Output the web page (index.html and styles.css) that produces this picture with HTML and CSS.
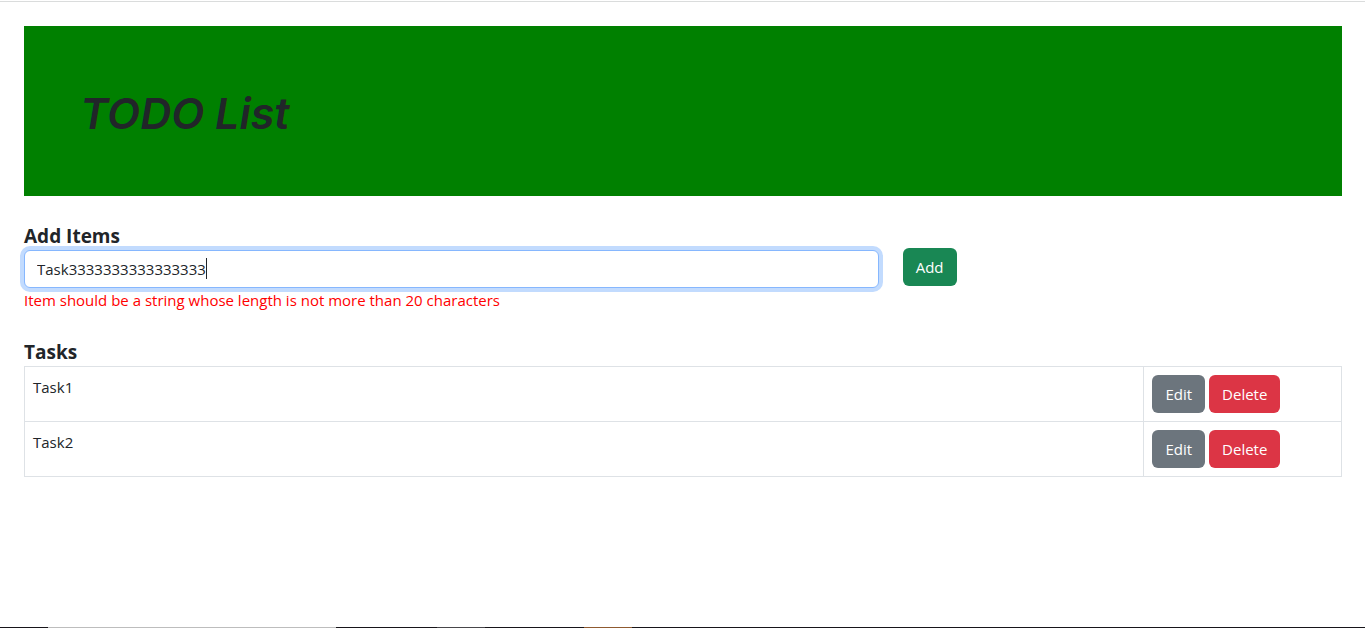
FILE: index.html
```
<!DOCTYPE html>
<html lang="en">
<head>
<meta charset="utf-8">
<meta name="viewport" content="width=device-width, initial-scale=1">
<title>TODO List</title>
<link rel="stylesheet" href="styles.css">
</head>
<body>
<main class="page">
  <header class="banner"><h1 class="banner-title">TODO List</h1></header>
  <form class="add-form">
    <div class="field">
      <label class="heading" for="item">Add Items</label>
      <div class="input-wrap">
        <input class="text-input" id="item" type="text" value="Task3333333333333333" aria-describedby="item-error" autocomplete="off" spellcheck="false">
        <span class="caret" aria-hidden="true"></span>
      </div>
      <p class="error" id="item-error">Item should be a string whose length is not more than 20 characters</p>
    </div>
    <button class="btn btn-add" type="button">Add</button>
  </form>
  <section>
    <h2 class="heading" id="tasks-heading">Tasks</h2>
    <table class="tasks" aria-labelledby="tasks-heading">
      <tbody>
        <tr>
          <td class="task-name">Task1</td>
          <td><div class="actions"><button class="btn btn-edit" type="button">Edit</button><button class="btn btn-delete" type="button">Delete</button></div></td>
        </tr>
        <tr>
          <td class="task-name">Task2</td>
          <td><div class="actions"><button class="btn btn-edit" type="button">Edit</button><button class="btn btn-delete" type="button">Delete</button></div></td>
        </tr>
      </tbody>
    </table>
  </section>
</main>
<footer class="taskbar">
  <span class="search"></span><span class="active-app"></span><span class="color-app"></span>
</footer>
</body>
</html>
```

FILE: styles.css
```
* {
  box-sizing: border-box;
}

body {
  display: flex;
  flex-direction: column;
  min-height: 100vh;
  margin: 0;
  color: #212529;
  background: #fff;
  font-family: "Segoe UI", "Open Sans", sans-serif;
  font-size: 15px;
  line-height: 24px;
}

.page {
  flex: 1;
  margin-top: 1px;
  padding: 24px 23px 24px 24px;
  border-top: 1px solid #dadcdc;
}

.banner {
  padding: 62px 56px 58px;
  background: green;
}

.banner-title {
  margin: 0;
  font-family: "Comic Sans MS", Inter, cursive;
  font-size: 43px;
  font-style: italic;
  font-weight: 600;
  line-height: 50px;
}

.add-form {
  display: flex;
  align-items: center;
  gap: 24px;
  margin: 28px 0;
}

.field {
  width: calc(65% - 2px);
}

.heading {
  display: block;
  margin: 0 0 2px;
  font-size: 19px;
  font-weight: 700;
  line-height: 24px;
}

.input-wrap {
  position: relative;
}

.text-input {
  display: block;
  width: 100%;
  height: 38px;
  padding: 6px 12px;
  color: #212529;
  background: #fff;
  border: 1px solid #86b7fe;
  border-radius: 6px;
  outline: 0;
  box-shadow: 0 0 0 4px #c2dbfe;
  caret-color: transparent;
  font: inherit;
}

.caret {
  position: absolute;
  top: 8px;
  left: 182px;
  width: 1px;
  height: 21px;
  background: #212529;
  pointer-events: none;
}

.error {
  margin: 0;
  color: red;
}

.btn {
  height: 38px;
  padding: 6px 12px;
  color: #fff;
  border: 1px solid transparent;
  border-radius: 6px;
  font: inherit;
}

.btn-add {
  margin-bottom: 2px;
  background: #198754;
}

.btn-edit {
  background: #6c757d;
}

.btn-delete {
  background: #dc3545;
}

.tasks {
  width: 100%;
  table-layout: fixed;
  border-collapse: collapse;
}

.tasks td {
  padding: 8px;
  border: 1px solid #dee2e6;
  vertical-align: top;
}

.task-name {
  width: 85%;
}

.actions {
  display: flex;
  gap: 4px;
}

.taskbar {
  display: flex;
  height: 1px;
  padding-left: 48px;
  background: #17151a;
}

.search {
  width: 288px;
  background: #bdbdbd;
}

.active-app {
  width: 48px;
  margin-left: 101px;
  background: #47464a;
}

.color-app {
  width: 48px;
  margin-left: 99px;
  background: #8f5a30;
}
```
